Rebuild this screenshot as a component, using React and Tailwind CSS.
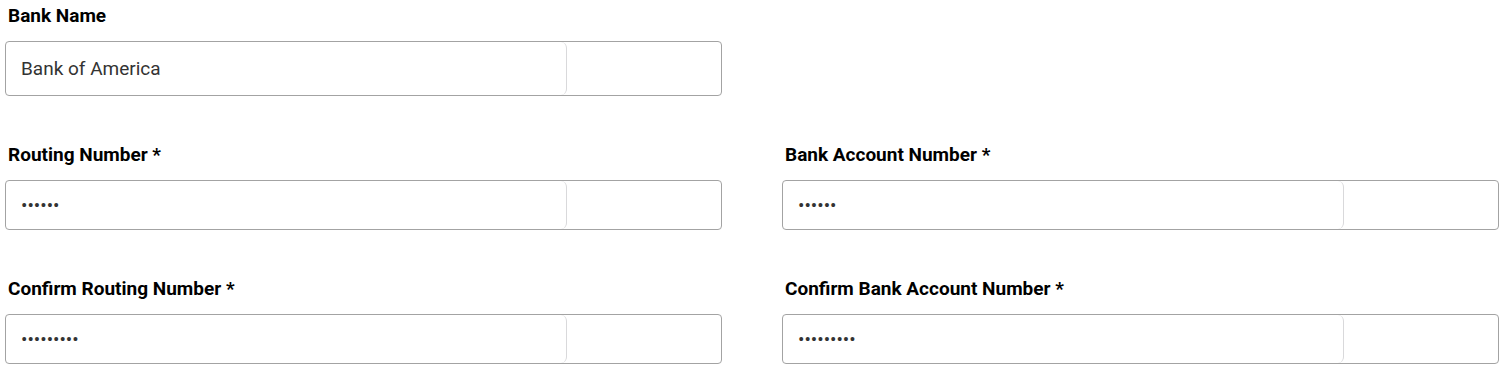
import { useState } from 'react';

const Field = ({ label, required, value, type = 'text', tall }) => {
  const [val, setVal] = useState(value);
  return (
    <div className="flex flex-col">
      <label className="text-[19px] leading-6 font-bold text-black pl-[3px] mb-[13px]">
        {label}{required && ' *'}
      </label>
      <div className={`flex border border-[#a3a3a3] rounded-[4px] bg-white ${tall ? 'h-[55px]' : 'h-[50px]'}`}>
        <input
          type={type}
          value={val}
          onChange={(e) => setVal(e.target.value)}
          className="w-[561px] h-full border-r border-[#d9d9db] rounded-r-[6px] px-[15px] text-[19px] text-[#333] outline-none bg-transparent"
        />
        <div className="flex-1" />
      </div>
    </div>
  );
};

export default function App() {
  return (
    <div className="bg-white min-h-[380px] pl-[5px] pr-[11px] pt-[4px]" style={{ fontFamily: 'Roboto, "Liberation Sans", sans-serif' }}>
      <div className="grid grid-cols-2 gap-x-[60px] gap-y-[47px]">
        <Field label="Bank Name" value="Bank of America" tall />
        <div />
        <Field label="Routing Number" required value="123456" type="password" />
        <Field label="Bank Account Number" required value="123456" type="password" />
        <Field label="Confirm Routing Number" required value="123456789" type="password" />
        <Field label="Confirm Bank Account Number" required value="123456789" type="password" />
      </div>
    </div>
  );
}
